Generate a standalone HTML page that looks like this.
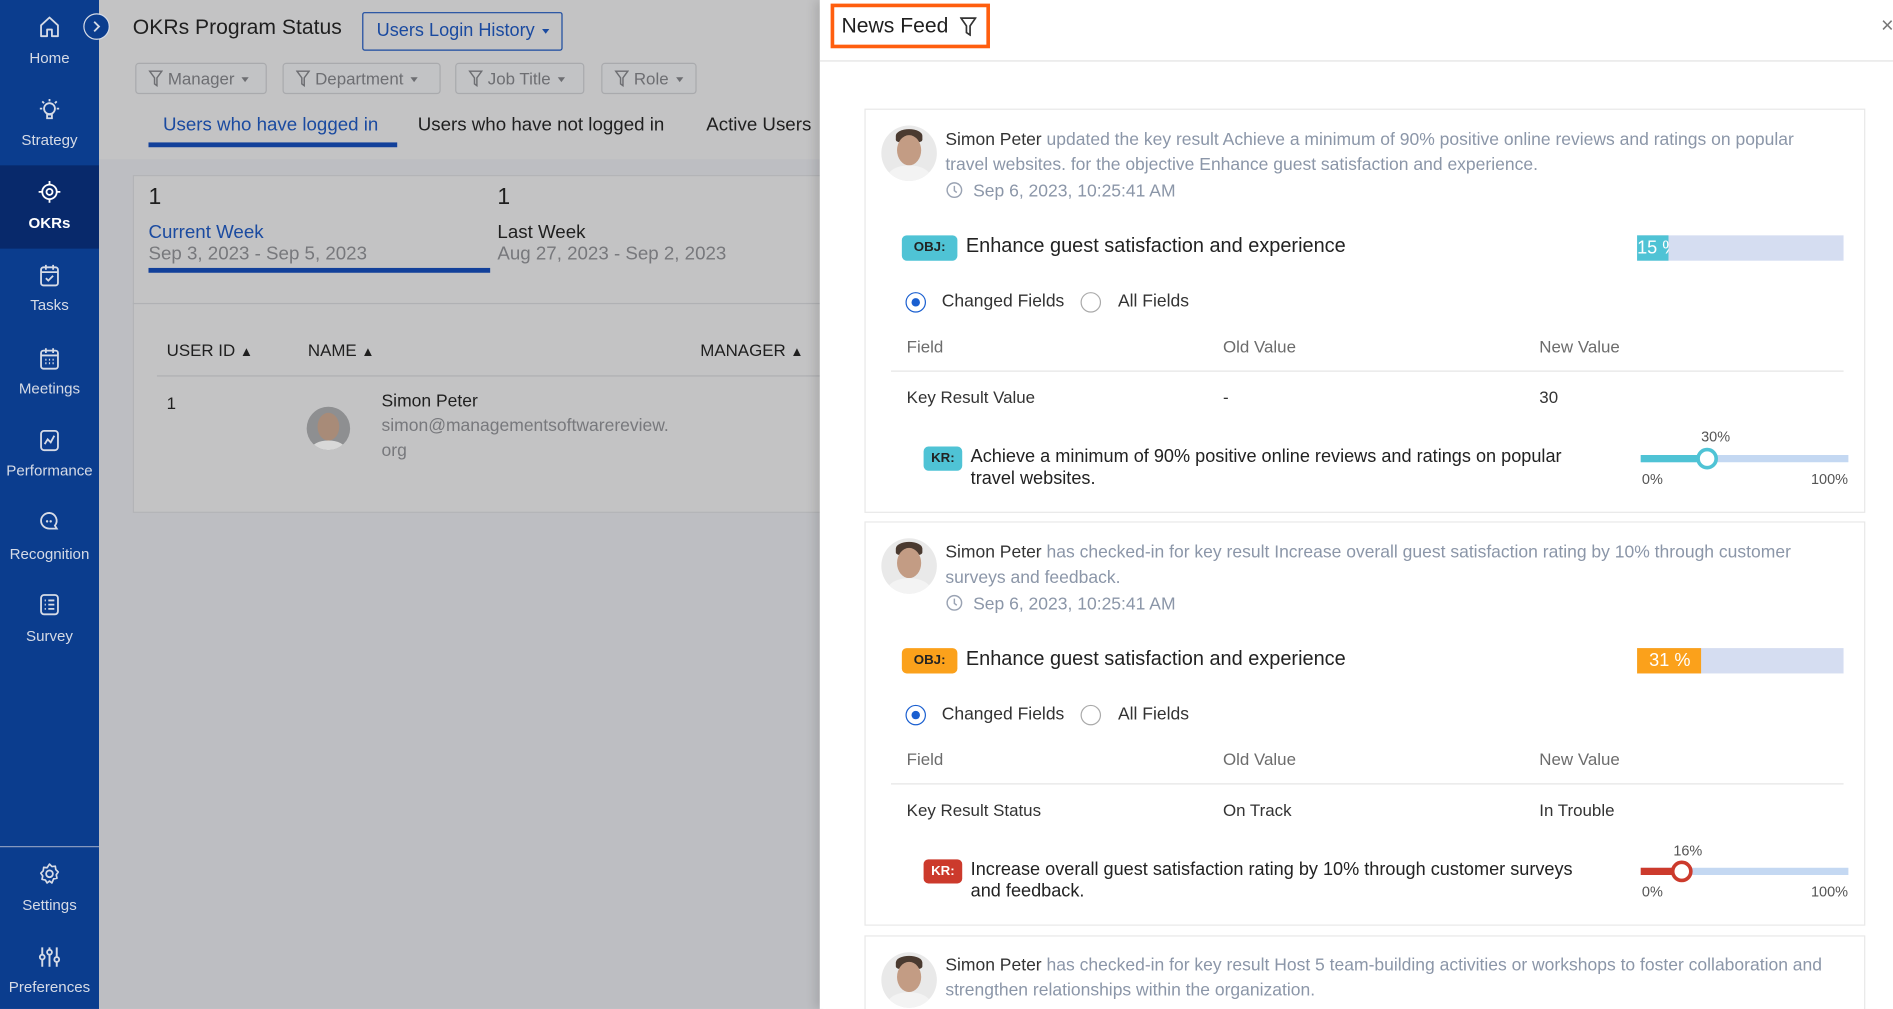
<!DOCTYPE html>
<html><head><meta charset="utf-8">
<style>
*{box-sizing:border-box;margin:0;padding:0}
html,body{width:1893px;height:1009px;overflow:hidden;background:#fff;font-family:"Liberation Sans",sans-serif}
#w{position:absolute;left:0;top:0;width:1568px;height:836px;transform:scale(1.2073,1.2069);transform-origin:0 0;overflow:hidden}
.a{position:absolute;white-space:nowrap}
.sb{position:absolute;left:0;top:0;width:82px;height:836px;background:#0b3d8e}
.ni{position:absolute;left:0;width:82px;text-align:center;color:#d6dbe6;font-size:12.5px}
.ni svg{position:absolute;left:31px;width:20px;height:20px}
.fb{position:absolute;top:52px;height:26px;border:1px solid #a9aaad;border-radius:3px;color:#6d6e72;font-size:14px;line-height:24px;padding-left:10px;background:#c2c3c5}
.car{display:inline-block;border-left:3.5px solid transparent;border-right:3.5px solid transparent;border-top:4px solid currentColor;vertical-align:middle;margin-left:6px}
.card{position:absolute;left:716px;width:829px;border:1px solid #e8e8e8;background:#fff}
.av{position:absolute;width:46px;height:46px;border-radius:50%;overflow:hidden;background:#e9e9e9}
.gray{color:#8b96a8}
.badge{position:absolute;height:21px;border-radius:4px;font-size:11px;font-weight:bold;line-height:21px;text-align:center;color:#222}
.th{color:#6c6c6c;font-size:14px}
.td{color:#333;font-size:14px}
</style></head><body><div id="w">

<!-- left main area (overlayed) -->
<div class="a" style="left:82px;top:0;width:600px;height:836px;background:#bdbec2"></div>
<div class="a" style="left:82px;top:0;width:600px;height:132px;background:#c3c3c4"></div>
<div class="a" style="left:110px;top:12px;font-size:17.5px;color:#1f1f1f">OKRs Program Status</div>
<div class="a" style="left:300px;top:10px;width:166px;height:32px;border:1.5px solid #1a4aa0;border-radius:2px;color:#1a4aa0;font-size:15px;line-height:29px;padding-left:11px">Users Login History<span class="car" style="margin-left:6px"></span></div>

<div class="fb" style="left:112px;width:109px">
<svg width="12" height="14" viewBox="0 0 12 14" style="vertical-align:-2px;margin-right:4px"><path d="M1 1h10L7 6.5V13L5 11.5V6.5Z" fill="none" stroke="#6d6e72" stroke-width="1.2"/></svg>Manager<span class="car"></span></div>
<div class="fb" style="left:234px;width:131px">
<svg width="12" height="14" viewBox="0 0 12 14" style="vertical-align:-2px;margin-right:4px"><path d="M1 1h10L7 6.5V13L5 11.5V6.5Z" fill="none" stroke="#6d6e72" stroke-width="1.2"/></svg>Department<span class="car"></span></div>
<div class="fb" style="left:377px;width:107px">
<svg width="12" height="14" viewBox="0 0 12 14" style="vertical-align:-2px;margin-right:4px"><path d="M1 1h10L7 6.5V13L5 11.5V6.5Z" fill="none" stroke="#6d6e72" stroke-width="1.2"/></svg>Job Title<span class="car"></span></div>
<div class="fb" style="left:498px;width:79px">
<svg width="12" height="14" viewBox="0 0 12 14" style="vertical-align:-2px;margin-right:4px"><path d="M1 1h10L7 6.5V13L5 11.5V6.5Z" fill="none" stroke="#6d6e72" stroke-width="1.2"/></svg>Role<span class="car"></span></div>

<div class="a" style="left:135px;top:95px;font-size:15.5px;color:#1a4aa0">Users who have logged in</div>
<div class="a" style="left:123px;top:118px;width:206px;height:4px;background:#12409a"></div>
<div class="a" style="left:346px;top:95px;font-size:15.5px;color:#1f1f1f">Users who have not logged in</div>
<div class="a" style="left:585px;top:95px;font-size:15.5px;color:#1f1f1f">Active Users</div>

<div class="a" style="left:110px;top:145px;width:575px;height:280px;background:#c3c3c4;border:1px solid #b3b4b7"></div>
<div class="a" style="left:110px;top:251px;width:575px;height:1px;background:#b0b1b4"></div>
<div class="a" style="left:123px;top:153px;font-size:19px;color:#1f1f1f">1</div>
<div class="a" style="left:123px;top:184px;font-size:15.5px;color:#1a4aa0">Current Week</div>
<div class="a" style="left:123px;top:202px;font-size:15.5px;color:#77787c">Sep 3, 2023 - Sep 5, 2023</div>
<div class="a" style="left:123px;top:222px;width:283px;height:4px;background:#12409a"></div>
<div class="a" style="left:412px;top:153px;font-size:19px;color:#1f1f1f">1</div>
<div class="a" style="left:412px;top:184px;font-size:15.5px;color:#1f1f1f">Last Week</div>
<div class="a" style="left:412px;top:202px;font-size:15.5px;color:#77787c">Aug 27, 2023 - Sep 2, 2023</div>

<div class="a" style="left:138px;top:282px;font-size:14px;color:#1f1f1f">USER ID <span style="font-size:11px">&#9650;</span></div>
<div class="a" style="left:255px;top:282px;font-size:14px;color:#1f1f1f">NAME <span style="font-size:11px">&#9650;</span></div>
<div class="a" style="left:580px;top:282px;font-size:14px;color:#1f1f1f">MANAGER <span style="font-size:11px">&#9650;</span></div>
<div class="a" style="left:130px;top:311px;width:555px;height:1px;background:#aeafb2"></div>
<div class="a" style="left:138px;top:326px;font-size:14px;color:#1f1f1f">1</div>
<div class="av" style="left:254px;top:337px;width:36px;height:36px;background:#8e8f91"><div style="position:absolute;left:9px;top:5px;width:18px;height:23px;border-radius:50%;background:#a88b78"></div><div style="position:absolute;left:4px;top:28px;width:28px;height:14px;border-radius:50%;background:#d8d8d8"></div></div>
<div class="a" style="left:316px;top:325px;font-size:14.5px;color:#1f1f1f">Simon Peter</div>
<div class="a" style="left:316px;top:345px;font-size:14.5px;color:#77787c">simon@managementsoftwarereview.</div>
<div class="a" style="left:316px;top:366px;font-size:14.5px;color:#77787c">org</div>

<!-- sidebar -->
<div class="sb"></div>
<div class="a" style="left:0;top:137px;width:82px;height:69px;background:#08296b"></div>
<div class="a" style="left:0;top:701px;width:82px;height:1px;background:#8a9bc0"></div>

<div class="ni" style="top:12px"><svg style="top:0" viewBox="0 0 20 20"><path d="M3 9L10 2.5 17 9V18H12V12.5H8V18H3Z" fill="none" stroke="#d6dbe6" stroke-width="1.5" stroke-linejoin="round"/></svg><div style="position:absolute;top:29px;width:82px">Home</div></div>
<div class="ni" style="top:81px"><svg style="top:0" viewBox="0 0 20 20"><circle cx="10" cy="9" r="4.5" fill="none" stroke="#d6dbe6" stroke-width="1.5"/><path d="M8 14h4v3H8zM10 1v2M2 9h2M16 9h2M4 3l1.5 1.5M16 3l-1.5 1.5" fill="none" stroke="#d6dbe6" stroke-width="1.5"/></svg><div style="position:absolute;top:28px;width:82px">Strategy</div></div>
<div class="ni" style="top:149px;color:#fff;font-weight:bold"><svg style="top:0" viewBox="0 0 20 20"><circle cx="10" cy="10" r="6" fill="none" stroke="#fff" stroke-width="1.5"/><circle cx="10" cy="10" r="2.5" fill="none" stroke="#fff" stroke-width="1.5"/><path d="M10 1v3M10 16v3M1 10h3M16 10h3" stroke="#fff" stroke-width="1.5"/></svg><div style="position:absolute;top:29px;width:82px">OKRs</div></div>
<div class="ni" style="top:218px"><svg style="top:0" viewBox="0 0 20 20"><rect x="3" y="3.5" width="14" height="15" rx="2" fill="none" stroke="#d6dbe6" stroke-width="1.5"/><path d="M3 7.5h14M7 1.5v4M13 1.5v4M7 12.5l2 2 4-4" fill="none" stroke="#d6dbe6" stroke-width="1.5"/></svg><div style="position:absolute;top:28px;width:82px">Tasks</div></div>
<div class="ni" style="top:287px"><svg style="top:0" viewBox="0 0 20 20"><rect x="3" y="3.5" width="14" height="15" rx="2" fill="none" stroke="#d6dbe6" stroke-width="1.5"/><path d="M3 7.5h14M7 1.5v4M13 1.5v4" stroke="#d6dbe6" stroke-width="1.5"/><path d="M6.5 11h1M9.5 11h1M12.5 11h1M6.5 14h1M9.5 14h1M12.5 14h1" stroke="#d6dbe6" stroke-width="1.6"/></svg><div style="position:absolute;top:28px;width:82px">Meetings</div></div>
<div class="ni" style="top:355px"><svg style="top:0" viewBox="0 0 20 20"><rect x="3" y="2" width="14" height="16" rx="2.5" fill="none" stroke="#d6dbe6" stroke-width="1.5"/><path d="M6 13l2.5-4 2.5 2.5L14 6" fill="none" stroke="#d6dbe6" stroke-width="1.5"/></svg><div style="position:absolute;top:28px;width:82px">Performance</div></div>
<div class="ni" style="top:422px"><svg style="top:0" viewBox="0 0 20 20"><path d="M10 3a7 6.5 0 1 0 0 13h6l-1.5-2.5A6.5 6.5 0 0 0 10 3Z" fill="none" stroke="#d6dbe6" stroke-width="1.5"/><circle cx="8" cy="10" r="1" fill="#d6dbe6"/><circle cx="11" cy="10" r="1" fill="#d6dbe6"/></svg><div style="position:absolute;top:30px;width:82px">Recognition</div></div>
<div class="ni" style="top:491px"><svg style="top:0" viewBox="0 0 20 20"><rect x="3" y="2" width="14" height="16" rx="2.5" fill="none" stroke="#d6dbe6" stroke-width="1.5"/><path d="M9 6.5h5M9 10h5M9 13.5h5M6 6.5h1M6 10h1M6 13.5h1" stroke="#d6dbe6" stroke-width="1.5"/></svg><div style="position:absolute;top:29px;width:82px">Survey</div></div>
<div class="ni" style="top:714px"><svg style="top:0" viewBox="0 0 20 20"><circle cx="10" cy="10" r="2.8" fill="none" stroke="#d6dbe6" stroke-width="1.5"/><path d="M10 2l2 2 2.8-.3.4 2.8 2 2-1.6 2.3.6 2.8-2.8.6L12 17.6 10 16l-2 1.6-1.4-2.4-2.8-.6.6-2.8L2.8 9.5l2-2 .4-2.8L8 5Z" fill="none" stroke="#d6dbe6" stroke-width="1.4" stroke-linejoin="round"/></svg><div style="position:absolute;top:29px;width:82px">Settings</div></div>
<div class="ni" style="top:783px"><svg style="top:0" viewBox="0 0 20 20"><path d="M4 2v6M4 12v6M10 2v2M10 8v10M16 2v8M16 14v4" stroke="#d6dbe6" stroke-width="1.6"/><circle cx="4" cy="10" r="2" fill="none" stroke="#d6dbe6" stroke-width="1.5"/><circle cx="10" cy="6" r="2" fill="none" stroke="#d6dbe6" stroke-width="1.5"/><circle cx="16" cy="12" r="2" fill="none" stroke="#d6dbe6" stroke-width="1.5"/></svg><div style="position:absolute;top:28px;width:82px">Preferences</div></div>

<div class="a" style="left:69px;top:11px;width:22px;height:22px;border-radius:50%;background:#0b3d8e;border:1.5px solid #d6dbe6"></div>
<svg class="a" style="left:76px;top:16px" width="8" height="12" viewBox="0 0 8 12"><path d="M2 2l4 4-4 4" fill="none" stroke="#d6dbe6" stroke-width="1.5"/></svg>

<!-- right panel -->
<div class="a" style="left:679px;top:0;width:889px;height:836px;background:#fff;box-shadow:-4px 0 8px rgba(0,0,0,.12)"></div>
<div class="a" style="left:688px;top:3px;width:132px;height:37px;border:3px solid #ff5e0e"></div>
<div class="a" style="left:697px;top:11px;font-size:17.5px;color:#1f1f1f">News Feed</div>
<svg class="a" style="left:795px;top:14px" width="14" height="16" viewBox="0 0 14 16"><path d="M1 1h12L8.5 7.5V15L5.5 13V7.5Z" fill="none" stroke="#333" stroke-width="1.4"/></svg>
<div class="a" style="left:1558px;top:11px;font-size:18px;color:#777">×</div>
<div class="a" style="left:679px;top:50px;width:889px;height:1px;background:#e2e2e2"></div>

<!-- card template -->
<div id="cards"></div>
<script></script>

<!-- card 1 -->
<div class="card" style="top:90px;height:335px"></div>
<div class="av" style="left:730px;top:104px"><div style="position:absolute;left:12px;top:3px;width:22px;height:11px;border-radius:50% 50% 20% 20%;background:#4a3a30"></div><div style="position:absolute;left:13px;top:8px;width:20px;height:25px;border-radius:50%;background:#c39c84"></div><div style="position:absolute;left:5px;top:33px;width:36px;height:20px;border-radius:50%;background:#f3f3f3"></div></div>
<div class="a" style="left:783px;top:106px;font-size:14.5px;line-height:21px;color:#333">Simon Peter <span class="gray">updated the key result Achieve a minimum of 90% positive online reviews and ratings on popular</span><br><span class="gray">travel websites. for the objective Enhance guest satisfaction and experience.</span></div>
<svg class="a" style="left:783px;top:150px" width="15" height="15" viewBox="0 0 15 15"><circle cx="7.5" cy="7.5" r="6" fill="none" stroke="#9aa3b3" stroke-width="1.2"/><path d="M7.5 4v4l2 1.5" fill="none" stroke="#9aa3b3" stroke-width="1.2"/></svg>
<div class="a gray" style="left:806px;top:151px;font-size:14.5px">Sep 6, 2023, 10:25:41 AM</div>
<div class="badge" style="left:747px;top:195px;width:46px;background:#4fc3d5">OBJ:</div>
<div class="a" style="left:800px;top:195px;font-size:16.5px;color:#222">Enhance guest satisfaction and experience</div>
<div class="a" style="left:1356px;top:195px;width:171px;height:21px;background:#d5ddf1"></div>
<div class="a" style="left:1356px;top:195px;width:26px;height:21px;background:#4fc3d5;color:#fff;font-size:15px;line-height:21px;overflow:hidden">15 %</div>
<div class="a" style="left:750px;top:242px;width:17px;height:17px;border-radius:50%;border:1.5px solid #1a5fd0"><div style="position:absolute;left:3.5px;top:3.5px;width:7px;height:7px;border-radius:50%;background:#1a5fd0"></div></div>
<div class="a" style="left:780px;top:242px;font-size:14.5px;color:#333">Changed Fields</div>
<div class="a" style="left:895px;top:242px;width:17px;height:17px;border-radius:50%;border:1px solid #aaa"></div>
<div class="a" style="left:926px;top:242px;font-size:14.5px;color:#333">All Fields</div>
<div class="a th" style="left:751px;top:279px">Field</div>
<div class="a th" style="left:1013px;top:279px">Old Value</div>
<div class="a th" style="left:1275px;top:279px">New Value</div>
<div class="a" style="left:738px;top:307px;width:789px;height:1px;background:#e4e4e4"></div>
<div class="a td" style="left:751px;top:321px">Key Result Value</div>
<div class="a td" style="left:1013px;top:321px">-</div>
<div class="a td" style="left:1275px;top:321px">30</div>
<div class="badge" style="left:765px;top:370px;width:32px;height:20px;line-height:20px;background:#4fc3d5">KR:</div>
<div class="a" style="left:804px;top:370px;font-size:15px;line-height:18px;color:#222">Achieve a minimum of 90% positive online reviews and ratings on popular<br>travel websites.</div>
<div class="a" style="left:1359px;top:377px;width:172px;height:6px;background:#c4d8f2"></div>
<div class="a" style="left:1359px;top:377px;width:55px;height:6px;background:#4fc3d5"></div>
<div class="a" style="left:1405px;top:371px;width:18px;height:18px;border-radius:50%;background:#fff;border:3px solid #4fc3d5"></div>
<div class="a" style="left:1409px;top:355px;font-size:12px;color:#555">30%</div>
<div class="a" style="left:1360px;top:390px;font-size:12px;color:#555">0%</div>
<div class="a" style="left:1500px;top:390px;font-size:12px;color:#555">100%</div>

<!-- card 2 -->
<div class="card" style="top:432px;height:335px"></div>
<div class="av" style="left:730px;top:446px"><div style="position:absolute;left:12px;top:3px;width:22px;height:11px;border-radius:50% 50% 20% 20%;background:#4a3a30"></div><div style="position:absolute;left:13px;top:8px;width:20px;height:25px;border-radius:50%;background:#c39c84"></div><div style="position:absolute;left:5px;top:33px;width:36px;height:20px;border-radius:50%;background:#f3f3f3"></div></div>
<div class="a" style="left:783px;top:448px;font-size:14.5px;line-height:21px;color:#333">Simon Peter <span class="gray">has checked-in for key result Increase overall guest satisfaction rating by 10% through customer</span><br><span class="gray">surveys and feedback.</span></div>
<svg class="a" style="left:783px;top:492px" width="15" height="15" viewBox="0 0 15 15"><circle cx="7.5" cy="7.5" r="6" fill="none" stroke="#9aa3b3" stroke-width="1.2"/><path d="M7.5 4v4l2 1.5" fill="none" stroke="#9aa3b3" stroke-width="1.2"/></svg>
<div class="a gray" style="left:806px;top:493px;font-size:14.5px">Sep 6, 2023, 10:25:41 AM</div>
<div class="badge" style="left:747px;top:537px;width:46px;background:#fba11b">OBJ:</div>
<div class="a" style="left:800px;top:537px;font-size:16.5px;color:#222">Enhance guest satisfaction and experience</div>
<div class="a" style="left:1356px;top:537px;width:171px;height:21px;background:#d5ddf1"></div>
<div class="a" style="left:1356px;top:537px;width:53px;height:21px;background:#fba11b;color:#fff;font-size:15px;line-height:21px;padding-left:10px">31 %</div>
<div class="a" style="left:750px;top:584px;width:17px;height:17px;border-radius:50%;border:1.5px solid #1a5fd0"><div style="position:absolute;left:3.5px;top:3.5px;width:7px;height:7px;border-radius:50%;background:#1a5fd0"></div></div>
<div class="a" style="left:780px;top:584px;font-size:14.5px;color:#333">Changed Fields</div>
<div class="a" style="left:895px;top:584px;width:17px;height:17px;border-radius:50%;border:1px solid #aaa"></div>
<div class="a" style="left:926px;top:584px;font-size:14.5px;color:#333">All Fields</div>
<div class="a th" style="left:751px;top:621px">Field</div>
<div class="a th" style="left:1013px;top:621px">Old Value</div>
<div class="a th" style="left:1275px;top:621px">New Value</div>
<div class="a" style="left:738px;top:649px;width:789px;height:1px;background:#e4e4e4"></div>
<div class="a td" style="left:751px;top:663px">Key Result Status</div>
<div class="a td" style="left:1013px;top:663px">On Track</div>
<div class="a td" style="left:1275px;top:663px">In Trouble</div>
<div class="badge" style="left:765px;top:712px;width:32px;height:20px;line-height:20px;background:#cc3a2c;color:#fff">KR:</div>
<div class="a" style="left:804px;top:712px;font-size:15px;line-height:18px;color:#222">Increase overall guest satisfaction rating by 10% through customer surveys<br>and feedback.</div>
<div class="a" style="left:1359px;top:719px;width:172px;height:6px;background:#c4d8f2"></div>
<div class="a" style="left:1359px;top:719px;width:34px;height:6px;background:#cc3a2c"></div>
<div class="a" style="left:1384px;top:713px;width:18px;height:18px;border-radius:50%;background:#fff;border:3px solid #cc3a2c"></div>
<div class="a" style="left:1386px;top:698px;font-size:12px;color:#555">16%</div>
<div class="a" style="left:1360px;top:732px;font-size:12px;color:#555">0%</div>
<div class="a" style="left:1500px;top:732px;font-size:12px;color:#555">100%</div>

<!-- card 3 -->
<div class="card" style="top:775px;height:80px"></div>
<div class="av" style="left:730px;top:789px"><div style="position:absolute;left:12px;top:3px;width:22px;height:11px;border-radius:50% 50% 20% 20%;background:#4a3a30"></div><div style="position:absolute;left:13px;top:8px;width:20px;height:25px;border-radius:50%;background:#c39c84"></div><div style="position:absolute;left:5px;top:33px;width:36px;height:20px;border-radius:50%;background:#f3f3f3"></div></div>
<div class="a" style="left:783px;top:790px;font-size:14.5px;line-height:21px;color:#333">Simon Peter <span class="gray">has checked-in for key result Host 5 team-building activities or workshops to foster collaboration and</span><br><span class="gray">strengthen relationships within the organization.</span></div>

</div></body></html>
